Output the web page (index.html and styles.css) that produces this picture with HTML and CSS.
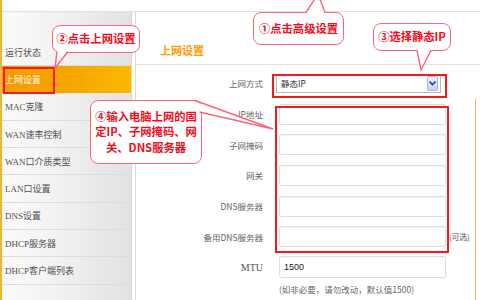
FILE: index.html
```html
<!DOCTYPE html>
<html lang="zh-CN">
<head>
<meta charset="utf-8">
<title>上网设置</title>
<link rel="stylesheet" href="styles.css">
</head>
<body>
<div class="page">
  <div class="topband"></div>
  <div class="main">
    <nav class="sidebar">
      <div class="nav-head"></div>
      <div class="nav-item">运行状态</div>
      <div class="nav-item active">上网设置</div>
      <div class="nav-item">MAC克隆</div>
      <div class="nav-item">WAN速率控制</div>
      <div class="nav-item">WAN口介质类型</div>
      <div class="nav-item">LAN口设置</div>
      <div class="nav-item">DNS设置</div>
      <div class="nav-item">DHCP服务器</div>
      <div class="nav-item">DHCP客户端列表</div>
      <div class="nav-item"></div>
    </nav>
    <section class="content">
      <h1 class="title">上网设置</h1>
      <div class="form">
        <div class="row">
          <label class="lbl">上网方式</label>
          <div class="select"><span>静态IP</span><span class="arrow"><svg width="9" height="7" viewBox="0 0 9 7"><polyline points="1.5,1.5 4.5,4.5 7.5,1.5" fill="none" stroke="#2a3f8f" stroke-width="1.6"/></svg></span></div>
        </div>
        <div class="row"><label class="lbl">IP地址</label><div class="input"></div></div>
        <div class="row"><label class="lbl">子网掩码</label><div class="input"></div></div>
        <div class="row"><label class="lbl">网关</label><div class="input"></div></div>
        <div class="row"><label class="lbl">DNS服务器</label><div class="input"></div></div>
        <div class="row"><label class="lbl">备用DNS服务器</label><div class="input"></div><span class="extra">(可选)</span></div>
        <div class="row"><label class="lbl mtu">MTU</label><div class="input val">1500</div></div>
        <div class="note">(如非必要，请勿改动，默认值1500)</div>
      </div>
    </section>
  </div>

  <div class="hl hl-nav"></div>
  <div class="hl hl-select"></div>
  <div class="hl hl-fields"></div>

  <div class="bubble b1">①点击高级设置</div>
  <div class="bubble b2">②点击上网设置</div>
  <div class="bubble b3">③选择静态IP</div>
  <div class="bubble b4">④输入电脑上网的固<br>定IP、子网掩码、网<br>关、DNS服务器</div>

  <svg class="tails" width="480" height="300" viewBox="0 0 480 300">
    <g fill="#fff" stroke="none">
      <polygon points="306,14 325,14 318,-6"/>
      <polygon points="57,50 68,50 55,68"/>
      <polygon points="417,49 431,49 421,70"/>
      <polygon points="195,102 198.5,112 273,129"/>
    </g>
    <g fill="none" stroke="#ff6577" stroke-width="1.4">
      <polyline points="306,12.5 318,-6 325,12.5"/>
      <polyline points="57,51.5 55,68 68,51.5"/>
      <polyline points="417,50.5 421,70 431,50.5"/>
      <polyline points="195,100.5 273,129 199.5,112"/>
    </g>
  </svg>
</div>
</body>
</html>
```

FILE: styles.css
```css
* { box-sizing: border-box; margin: 0; padding: 0; }
html, body { width: 480px; height: 300px; overflow: hidden; background: #fff; }
body { font-family: "Noto Sans CJK SC", "Liberation Sans", sans-serif; }

.page {
  position: relative;
  width: 480px;
  height: 300px;
  border-left: 2px solid #f6b041;
  display: flex;
  flex-direction: column;
}
.topband { height: 12px; border-bottom: 1px solid #e2e2e2; flex: none; }
.main { display: flex; flex: 1; min-height: 0; }

.sidebar {
  width: 130px;
  flex: none;
  border-right: 1px solid #d6d6d6;
  background: linear-gradient(to right, #fbfbfb 0%, #f1f1f1 45%, #e2e2e2 100%);
  display: flex;
  flex-direction: column;
}
.nav-head { height: 27px; flex: none; }
.nav-item {
  height: 27.3px;
  flex: none;
  border-bottom: 1px solid #dcdcdc;
  padding-left: 3px;
  display: flex;
  align-items: center;
  font-family: "Liberation Serif", "Noto Sans CJK SC", serif;
  font-size: 9px;
  color: #4f4f4f;
  white-space: nowrap;
}
.nav-item.active {
  background: linear-gradient(to right, #f39a00 0%, #f7a800 60%, #fbb900 100%);
  color: #fff8e0;
  border-bottom-color: #e8e8e8;
}

.content {
  flex: 1;
  margin-left: 3px;
  border-left: 1px solid #dadada;
  display: flex;
  flex-direction: column;
}
.title {
  height: 53px;
  flex: none;
  border-bottom: 1px solid #e0e0e0;
  padding-left: 24px;
  padding-bottom: 6px;
  display: flex;
  align-items: flex-end;
  font-size: 11px;
  font-weight: bold;
  color: #ff9a00;
}
.form {
  position: relative;
  flex: 1;
  padding-top: 3px;
}
.form::after {
  content: "";
  position: absolute;
  right: 4px;
  top: 34px;
  bottom: 0;
  width: 1px;
  background: #f5b560;
}
.row {
  height: 30.7px;
  display: flex;
  align-items: center;
}
.lbl {
  width: 127px;
  flex: none;
  text-align: right;
  font-size: 8.5px;
  color: #666;
  margin-right: 16px;
  white-space: nowrap;
}
.lbl.mtu { font-family: "Liberation Serif", serif; font-size: 10px; color: #555; }
.input {
  width: 167px;
  height: 21px;
  flex: none;
  background: #fff;
  border: 1px solid #dedede;
  border-radius: 2px;
  box-shadow: inset 0 1px 1px rgba(0,0,0,0.04);
}
.input.val {
  height: 22px;
  display: flex;
  align-items: center;
  padding-left: 4px;
  font-family: "Liberation Sans", sans-serif;
  font-size: 9px;
  color: #222;
}
.select {
  margin-left: -3px;
  width: 165px;
  height: 19px;
  flex: none;
  border: 1px solid #b8b8b8;
  background: #fff;
  display: flex;
  align-items: center;
  justify-content: space-between;
  padding: 0 2px 0 4px;
  font-size: 8.5px;
  color: #333;
}
.arrow {
  width: 11px;
  height: 15px;
  border: 1px solid #a7b6d6;
  border-radius: 2px;
  background: linear-gradient(#eef3fd, #c3d2f2);
  display: flex;
  align-items: center;
  justify-content: center;
}
.extra { margin-left: 3px; font-size: 8px; color: #555; white-space: nowrap; letter-spacing: -0.2px; }
.note {
  margin-left: 143px;
  margin-top: 0;
  font-size: 8.5px;
  color: #666;
  white-space: nowrap;
}

/* red highlight frames laid over the page */
.hl { position: absolute; border: 2px solid #ee1c1c; }
.hl-nav { left: 1px; top: 67px; width: 52px; height: 27px; }
.hl-select { left: 270px; top: 74px; width: 175px; height: 24px; }
.hl-fields { left: 273px; top: 106px; width: 174px; height: 147px; }

/* callout bubbles */
.bubble {
  position: absolute;
  background: #fff;
  border: 1.4px solid #ff6577;
  border-radius: 8px;
  color: #f20d1d;
  font-weight: bold;
  font-size: 11.3px;
  line-height: 1;
  display: flex;
  align-items: center;
  justify-content: center;
  text-align: center;
  white-space: nowrap;
}
.b1 { left: 251px; top: 12px; width: 91px; height: 33px; }
.b2 { left: 50px; top: 25px; width: 88px; height: 28px; }
.b3 { left: 371px; top: 23px; width: 78px; height: 28px; }
.b4 { left: 88px; top: 100px; width: 112px; height: 64px; line-height: 15.5px; }

.tails { position: absolute; left: -2px; top: 0; pointer-events: none; }
```
